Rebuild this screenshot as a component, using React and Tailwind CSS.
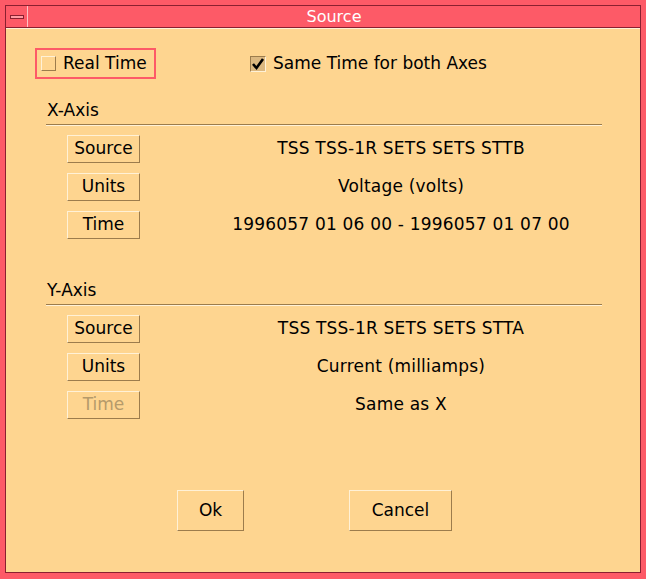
export default function App() {
  const font = { fontFamily: '"DejaVu Sans", "Liberation Sans", sans-serif' };
  const Btn = ({ children, disabled, cls = "w-[73px] h-[28px]" }) => (
    <div className={`${cls} flex items-center justify-center border border-t-[#fff1d6] border-l-[#fff1d6] border-r-[#9c7c4c] border-b-[#9c7c4c] ${disabled ? "text-[#b59a6a]" : "text-black"}`}>{children}</div>
  );
  const Row = ({ b, v, disabled }) => (
    <div className="flex items-center h-[38px]">
      <div className="ml-[61px]"><Btn disabled={disabled}>{b}</Btn></div>
      <div className="ml-[61px] w-[400px] text-center tracking-[0.2px]">{v}</div>
    </div>
  );
  const Axis = ({ title, rows }) => (
    <div>
      <div className="ml-[41px] h-[22px] leading-[22px]">{title}</div>
      <div className="ml-[40px] w-[556px] h-[2px] border-t border-t-[#9c7c4c] border-b border-b-[#fff1d6] mt-[3px] mb-[4px]" />
      {rows.map((r, i) => <Row key={i} {...r} />)}
    </div>
  );
  return (
    <div style={font} className="w-[646px] h-[579px] bg-[#fd5a67] p-[5px] pb-[6px] text-[17px] text-black">
      <div className="w-full h-full flex flex-col border border-[#8a2030]">
        <div className="h-[22px] flex items-center relative border-b border-[#8a2030]">
          <div className="w-[22px] h-full border-r border-[#ffc0c4] flex items-center justify-center">
            <div className="w-[14px] h-[4px] border border-[#8a2030] bg-[#ff9aa2]" />
          </div>
          <div className="flex-1 text-center text-white text-[16px]">Source</div>
        </div>
        <div className="flex-1 bg-[#fed590] border-t border-[#fff1d6]">
          <div className="flex items-center mt-[19px] h-[31px]">
            <div className="ml-[29px] w-[121px] h-[31px] border-2 border-[#fd5a67] flex items-center">
              <div className="ml-[4px] w-[15px] h-[15px] border border-t-[#fff1d6] border-l-[#fff1d6] border-r-[#9c7c4c] border-b-[#9c7c4c]" />
              <span className="ml-[7px]">Real Time</span>
            </div>
            <div className="ml-[94px] w-[16px] h-[16px] bg-[#dcb880] border border-t-[#9c7c4c] border-l-[#9c7c4c] border-r-[#fff1d6] border-b-[#fff1d6] flex items-center justify-center">
              <svg width="14" height="14" viewBox="0 0 14 14"><path d="M2 7 L5.5 11 L12 2" stroke="black" strokeWidth="2.6" fill="none" /></svg>
            </div>
            <span className="ml-[7px]">Same Time for both Axes</span>
          </div>
          <div className="mt-[20px]">
            <Axis title="X-Axis" rows={[
              { b: "Source", v: "TSS TSS-1R SETS SETS STTB" },
              { b: "Units", v: "Voltage (volts)" },
              { b: "Time", v: "1996057 01 06 00 - 1996057 01 07 00" },
            ]} />
          </div>
          <div className="mt-[35px]">
            <Axis title="Y-Axis" rows={[
              { b: "Source", v: "TSS TSS-1R SETS SETS STTA" },
              { b: "Units", v: "Current (milliamps)" },
              { b: "Time", v: "Same as X", disabled: true },
            ]} />
          </div>
          <div className="flex mt-[66px]">
            <div className="ml-[171px]"><Btn cls="w-[67px] h-[41px]">Ok</Btn></div>
            <div className="ml-[105px]"><Btn cls="w-[103px] h-[41px]">Cancel</Btn></div>
          </div>
        </div>
      </div>
    </div>
  );
}
